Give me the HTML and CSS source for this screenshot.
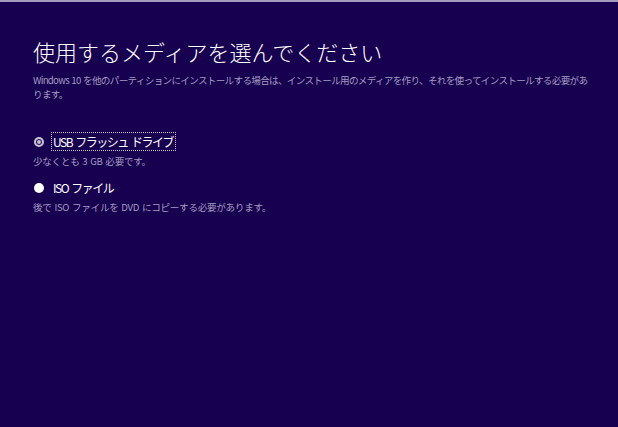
FILE: index.html
```html
<!DOCTYPE html>
<html lang="ja">
<head>
    <meta charset="UTF-8">
    <title>使用するメディアを選んでください</title>
    <link rel="stylesheet" href="styles.css">
</head>
<body>
    <div class="page">
        <h1 class="title">使用するメディアを選んでください</h1>
        <p class="intro">Windows 10 を他のパーティションにインストールする場合は、インストール用のメディアを作り、それを使ってインストールする必要があ<br>ります。</p>

        <div class="options">
            <div class="option">
                <div class="option-row">
                    <span class="radio checked"></span>
                    <span class="option-label focused">USB フラッシュ ドライブ</span>
                </div>
                <p class="option-desc">少なくとも 3 GB 必要です。</p>
            </div>
            <div class="option">
                <div class="option-row">
                    <span class="radio"></span>
                    <span class="option-label">ISO ファイル</span>
                </div>
                <p class="option-desc">後で ISO ファイルを DVD にコピーする必要があります。</p>
            </div>
        </div>
    </div>
</body>
</html>
```

FILE: styles.css
```css
* {
    margin: 0;
    padding: 0;
    box-sizing: border-box;
}

html, body {
    height: 100%;
}

body {
    background: #17004f;
    border-top: 2px solid #a59dc4;
    font-family: "Noto Sans CJK JP", "Noto Sans", sans-serif;
    color: #ffffff;
}

.page {
    padding: 34px 0 0 33px;
}

.title {
    font-size: 22px;
    font-weight: 300;
    line-height: 30px;
}

.intro {
    margin-top: 7px;
    width: 580px;
    font-size: 9.6px;
    line-height: 14px;
    color: #a29cc0;
    letter-spacing: -0.7px;
    word-spacing: 1px;
}

.options {
    margin-top: 31px;
    display: flex;
    flex-direction: column;
    gap: 10px;
}

.option-row {
    display: flex;
    align-items: center;
    gap: 7px;
}

.radio {
    width: 10px;
    height: 10px;
    border-radius: 50%;
    background: #ffffff;
    margin-left: 1px;
}

.radio.checked {
    background: #17004f;
    border: 2px solid #c8c4d4;
    box-shadow: inset 0 0 0 1px #17004f, inset 0 0 0 3px #c8c4d4;
}

.option-label {
    font-size: 12px;
    line-height: 17px;
    padding: 0 2px 0 1px;
    letter-spacing: -1.5px;
    word-spacing: 2px;
    border: 1px solid transparent;
}

.option-label.focused {
    border: 1px dotted #c8c4d4;
}

.option-desc {
    margin-top: 3px;
    font-size: 9.6px;
    line-height: 14px;
    color: #a29cc0;
    letter-spacing: -0.3px;
    word-spacing: 1px;
}
```
